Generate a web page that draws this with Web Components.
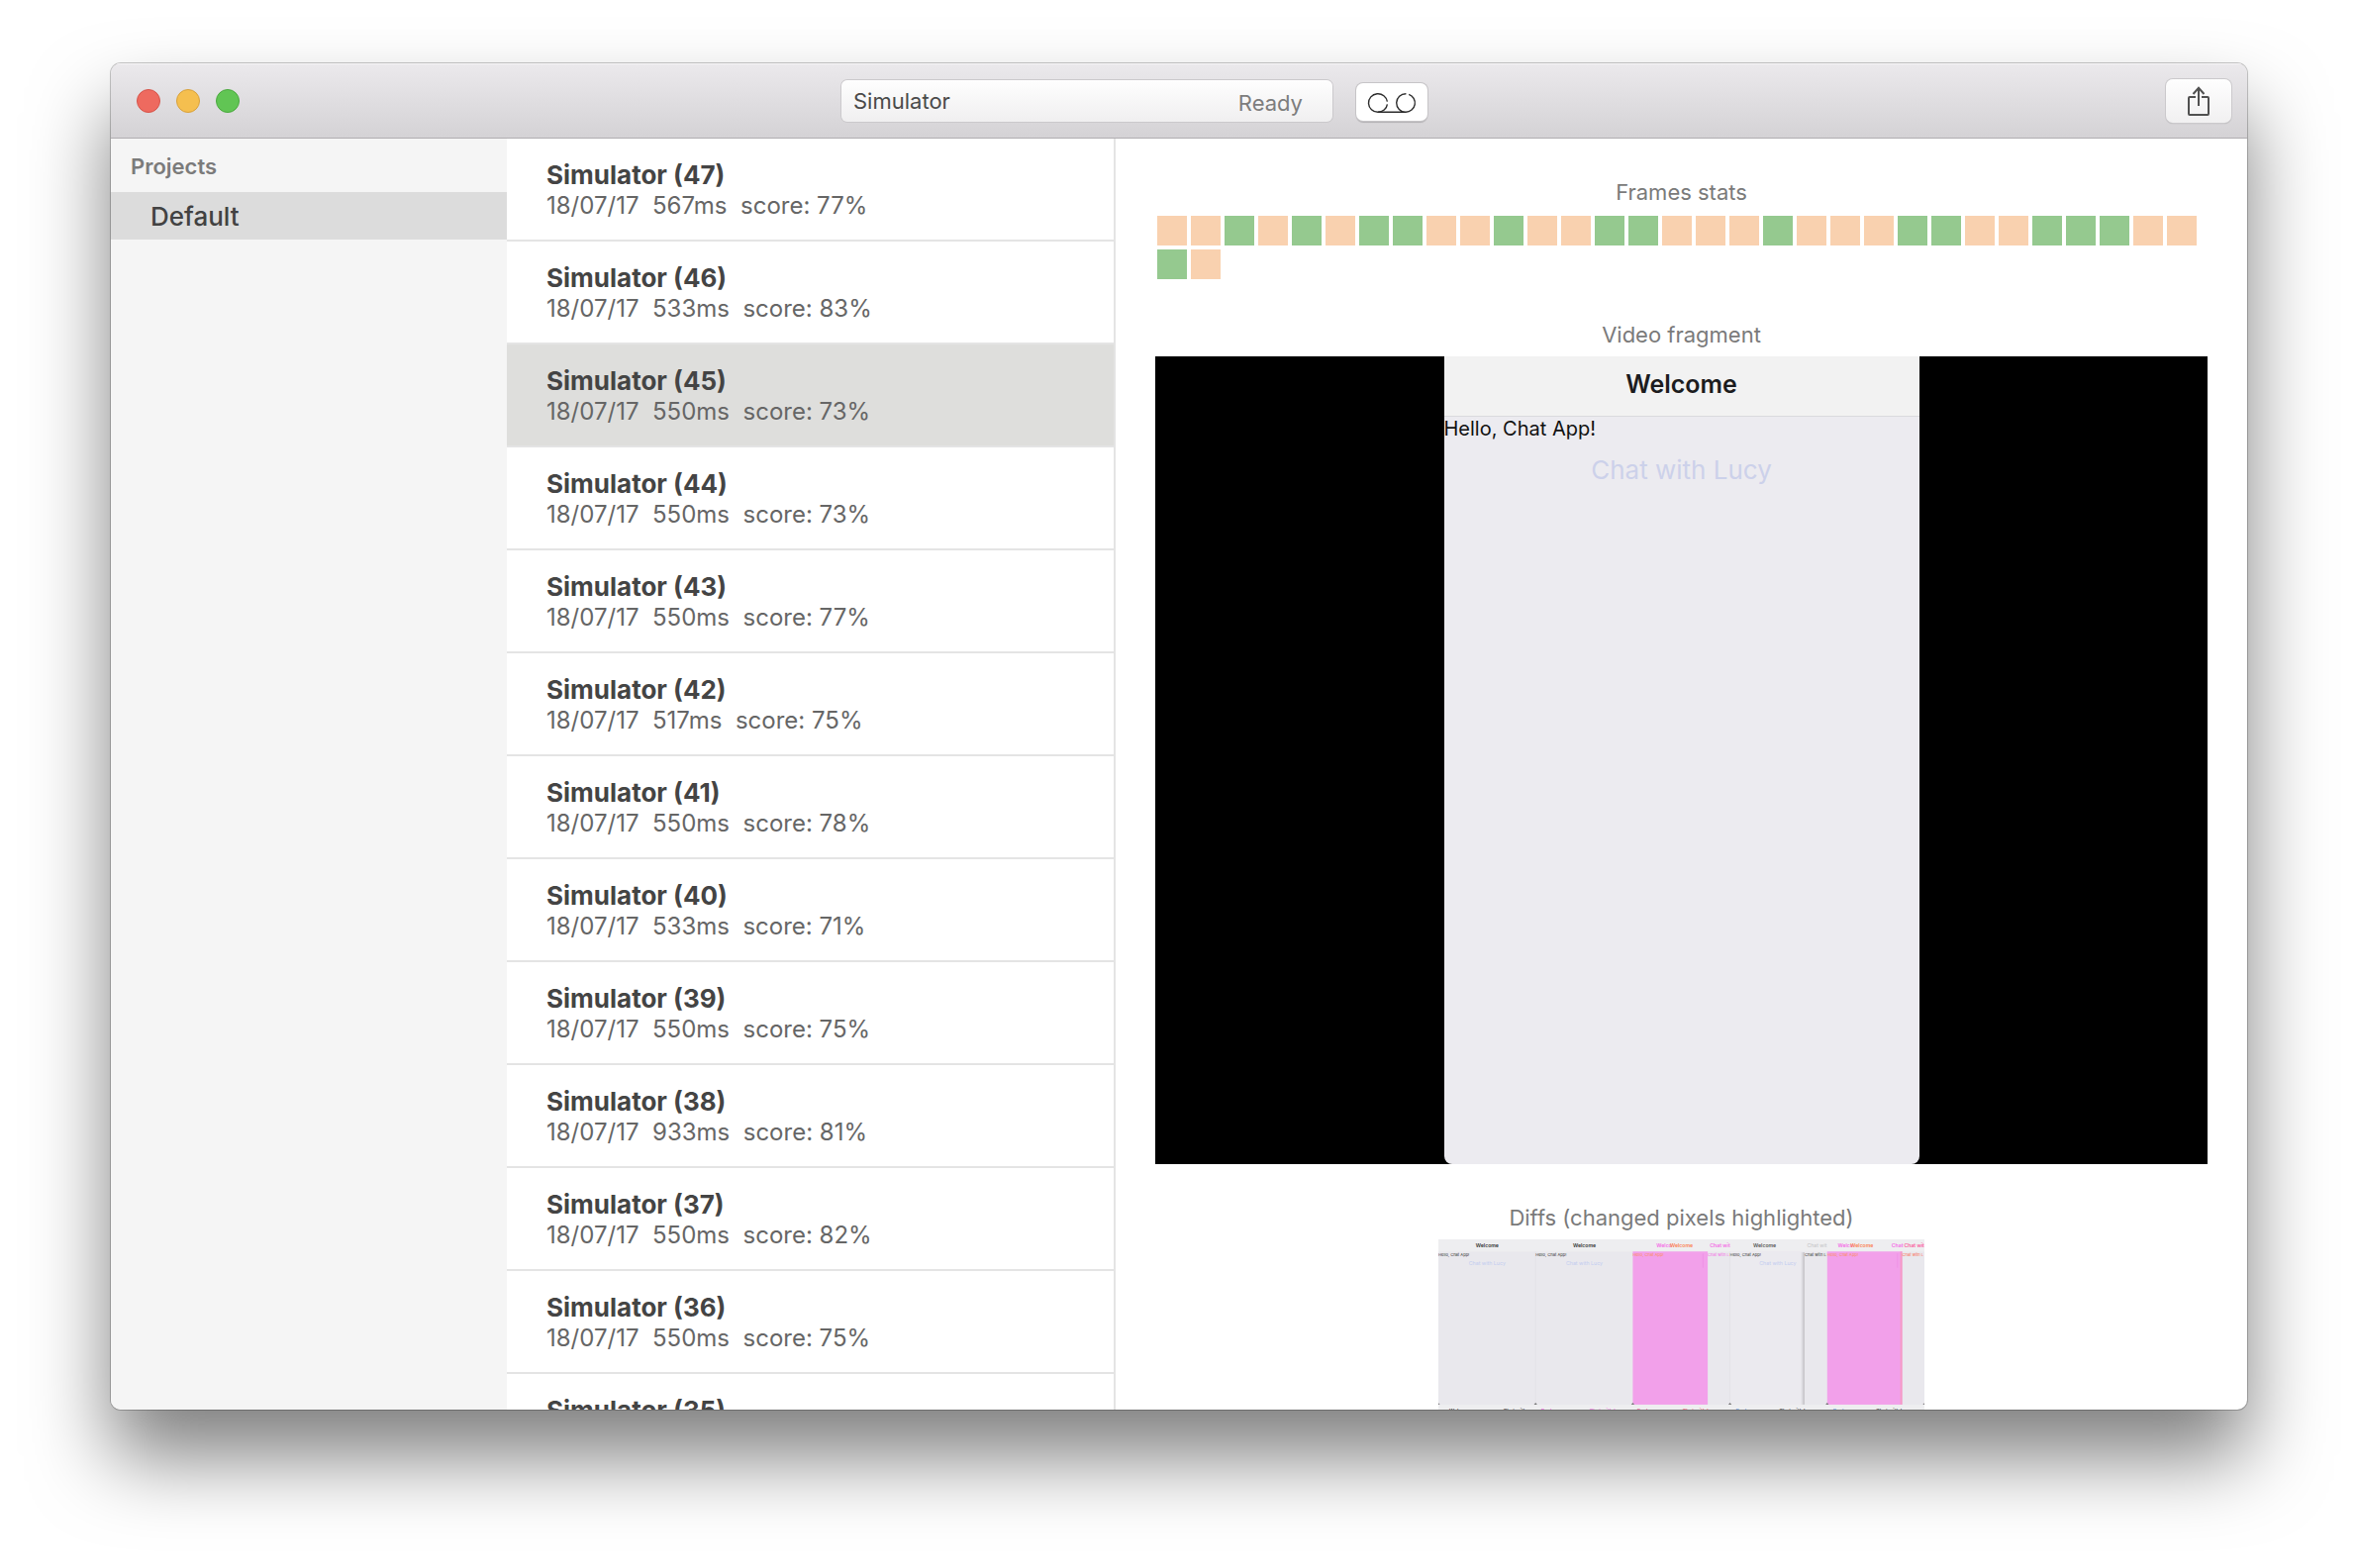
<!DOCTYPE html>
<html lang="en">
<head>
<meta charset="utf-8">
<title>Simulator</title>
<style>
  html, body { height: 100%; margin: 0; background: #fff; }
  body {
    box-sizing: border-box;
    padding: 64px 112px 160px;
    font-family: Inter, "Liberation Sans", sans-serif;
    color: #464646;
    overflow: hidden;
  }
</style>
</head>
<body>
<app-window>
  <tool-bar slot="toolbar" name="Simulator" status="Ready"></tool-bar>
  <project-sidebar></project-sidebar>
  <run-list></run-list>
  <run-detail>
    <detail-section heading="Frames stats"><frame-stats frames="OOGOGOGGOOGOOGGOOOGOOOGGOOGGGOOGO"></frame-stats></detail-section>
    <detail-section heading="Video fragment"><video-fragment></video-fragment></detail-section>
    <detail-section heading="Diffs (changed pixels highlighted)"><diff-sheet></diff-sheet></detail-section>
  </run-detail>
</app-window>

<script>
function define(name, render) {
  customElements.define(name, class extends HTMLElement {
    constructor() {
      super();
      this.attachShadow({ mode: 'open' });
    }
    connectedCallback() {
      this.shadowRoot.innerHTML = render(this);
    }
  });
}

define('app-window', () => `
  <style>
    :host {
      display: flex; flex-direction: column; height: 100%;
      border-radius: 10px; overflow: hidden; background: #fff;
      box-shadow: 0 0 0 1px rgba(0,0,0,.22), 0 48px 80px rgba(0,0,0,.5);
    }
    main { display: flex; flex: 1; min-height: 0; }
  </style>
  <slot name="toolbar"></slot>
  <main><slot></slot></main>`);

define('tool-bar', el => `
  <style>
    :host {
      display: grid; grid-template-columns: 8fr auto 9fr; align-items: center;
      box-sizing: border-box; height: 76px; flex: none; padding-left: 2px;
      background: linear-gradient(#ebe9ec, #d4d2d5);
      box-shadow: inset 0 1px #f7f6f7, inset 0 -1px #b0adb1;
    }
    .lights { display: flex; gap: 16px; padding-left: 24px; }
    .lights button { width: 24px; height: 24px; padding: 0; border-radius: 50%; border: 1px solid var(--rim); }
    .close { background: #ee6a5f; --rim: #d6544a; }
    .min { background: #f5bf4f; --rim: #d8a13c; }
    .zoom { background: #61c554; --rim: #4ba93f; }
    .middle { display: flex; gap: 24px; align-items: center; }
    .status {
      display: flex; justify-content: space-between; align-items: center; box-sizing: border-box;
      width: 496px; height: 42px; padding: 0 30px 0 12px; border-radius: 6px;
      background: linear-gradient(#fefefe, #f0eff0); box-shadow: 0 0 0 1px #cbc9cc;
      font-size: 22px; line-height: 28px; color: #4a4a4a;
    }
    .state { color: #7d7d7d; padding-top: 4px; }
    .tool {
      display: flex; align-items: center; justify-content: center; padding: 0;
      border: 0; border-radius: 7px;
      background: #fff; box-shadow: 0 0 0 1px #c6c4c7, 0 2px 1px rgba(0,0,0,.18);
    }
    .record { box-sizing: border-box; width: 72px; height: 38px; margin-top: 2px; padding-top: 2px; }
    .share {
      justify-self: end; margin-right: 16px; width: 66px; height: 44px;
      background: linear-gradient(#fefefe, #f1f0f1);
      box-shadow: 0 0 0 1px #cbc9cc, 0 1px 1px rgba(0,0,0,.25);
    }
    svg { display: block; fill: none; }
  </style>
  <div class="lights">
    <button class="close" aria-label="Close"></button>
    <button class="min" aria-label="Minimise"></button>
    <button class="zoom" aria-label="Zoom"></button>
  </div>
  <div class="middle">
    <div class="status"><span>${el.getAttribute('name')}</span><span class="state">${el.getAttribute('status')}</span></div>
    <button class="tool record" aria-label="Record">
      <svg width="50" height="22" viewBox="0 0 50 22" stroke="#2c2c2c" stroke-width="1.4">
        <path d="M20.400 9.700A9.500 9.300 0 1 0 11 20.300A9.500 9.300 0 0 0 20.400 12.300"/>
        <path d="M11 20.300H39A9.500 9.300 0 1 1 39.400 1.700M42.200 2.300A9.500 9.300 0 0 1 39 20.300"/>
      </svg>
    </button>
  </div>
  <button class="tool share" aria-label="Share">
    <svg width="24" height="32" viewBox="0 0 24 32" stroke="#505050" stroke-width="2">
      <path d="M9 12H3a1 1 0 0 0-1 1v16a1 1 0 0 0 1 1h18a1 1 0 0 0 1-1V13a1 1 0 0 0-1-1H15"/>
      <path d="M12 21V3M6.500 9L12 2.800L17.500 9"/>
    </svg>
  </button>`);

define('project-sidebar', () => `
  <style>
    :host { display: block; width: 400px; flex: none; background: #f5f5f5; }
    h2 { margin: 0; padding: 14px 20px 12px; font-size: 22px; line-height: 28px; font-weight: 600; color: #7b7b7b; }
    button {
      display: block; width: 100%; border: 0; padding: 2px 40px 0; text-align: left;
      font: 500 26px/46px Inter, sans-serif; color: #424242; background: #dcdcdc;
    }
  </style>
  <h2>Projects</h2>
  <button>Default</button>`);

define('run-row', el => `
  <style>
    :host { display: block; }
    button {
      display: flex; flex-direction: column; justify-content: flex-start; align-items: flex-start;
      box-sizing: border-box; width: 100%; height: 104px; padding: 21px 40px 0;
      border: 0; border-bottom: 2px solid #e4e4e4; background: #fff;
      text-align: left; font: inherit; white-space: pre;
    }
    :host([selected]) button { background: #dededc; }
    strong { font-size: 26px; line-height: 32px; font-weight: 700; color: #444; }
    span { font-size: 24px; line-height: 30px; color: #666; }
  </style>
  <button><strong>Simulator (${el.getAttribute('number')})</strong>${
    el.hasAttribute('time') ? `<span>18/07/17  ${el.getAttribute('time')}ms  score: ${el.getAttribute('score')}%</span>` : ''
  }</button>`);

const runs = [
  [47, 567, 77], [46, 533, 83], [45, 550, 73], [44, 550, 73], [43, 550, 77], [42, 517, 75],
  [41, 550, 78], [40, 533, 71], [39, 550, 75], [38, 933, 81], [37, 550, 82], [36, 550, 75], [35]
];
define('run-list', () => `
  <style>
    :host { display: block; box-sizing: border-box; width: 615px; flex: none; overflow: hidden; border-right: 2px solid #e4e4e4; }
  </style>
  ${runs.map(([n, time, score]) =>
    `<run-row number="${n}" ${time ? `time="${time}" score="${score}"` : ''} ${n === 45 ? 'selected' : ''}></run-row>`).join('')}`);

define('run-detail', () => `
  <style>
    :host { display: flex; flex-direction: column; gap: 40px; flex: 1; min-width: 0; padding: 40px; overflow: hidden; }
  </style>
  <slot></slot>`);

define('detail-section', el => `
  <style>
    :host { display: flex; flex-direction: column; gap: 8px; }
    h3 { margin: 0; text-align: center; font-size: 22px; line-height: 28px; font-weight: 400; color: #7a7a7a; }
  </style>
  <h3>${el.getAttribute('heading')}</h3>
  <slot></slot>`);

define('frame-stats', el => `
  <style>
    :host { display: flex; flex-wrap: wrap; gap: 4px; padding: 2px; }
    i { width: 30px; height: 30px; background: #f9d1af; }
    .G { background: #95c98f; }
  </style>
  ${[...el.getAttribute('frames')].map(f => `<i class="${f}"></i>`).join('')}`);

define('video-fragment', () => `
  <style>
    :host { display: flex; justify-content: center; height: 816px; background: #000; }
    .phone { width: 480px; border-radius: 0 0 8px 8px; background: #ecebf0; }
    header {
      box-sizing: border-box; height: 61px; border-bottom: 1px solid #dadadd; background: #f2f2f2;
      text-align: center; font-size: 25px; line-height: 56px; font-weight: 600; color: #1c1c1e;
    }
    p { margin: 0; font-size: 20px; line-height: 24px; color: #111; }
    a { display: block; margin-top: 14px; text-align: center; font-size: 26px; line-height: 32px; color: #ccd1ea; text-decoration: none; }
  </style>
  <div class="phone">
    <header>Welcome</header>
    <p>Hello, Chat App!</p>
    <a href="#">Chat with Lucy</a>
  </div>`);

/* Contact sheet of frames; every frame is a 480 by 816 cell. */
define('diff-sheet', () => `
  <style>
    :host { display: flex; justify-content: center; }
    svg { display: block; width: 491px; height: auto; flex: none; }
    .t { font-size: 25px; font-weight: 600; }
    .s { font-size: 20px; }
    .l { font-size: 26px; }
  </style>
  <svg viewBox="0 0 2400 1632" font-family="Inter, sans-serif">
    <rect width="2400" height="1632" fill="#e9e8ed"/>
    <rect width="2400" height="60" fill="#eeeef0"/>
    <rect y="816" width="2400" height="60" fill="#eeeef0"/>
    <rect x="1440" y="60" width="362" height="756" fill="#ebeaef"/>
    <path d="M480 60V816M1440 60V816" stroke="#e3e2e8" stroke-width="5"/>
    <g fill="#f2a0ea">
      <rect x="960" y="60" width="370" height="756"/>
      <rect x="1920" y="60" width="370" height="756"/>
    </g>
    <path d="M1307 70V140M2267 70V140" stroke="#ee8fe4" stroke-width="4"/>
    <rect x="2281" y="60" width="9" height="756" fill="#f59ac4"/>
    <rect x="1792" y="64" width="8" height="752" fill="#dddce1"/>
    <rect x="1800" y="64" width="8" height="752" fill="#c6c5ca"/>
    <g fill="#777">
      <path d="M0 808v8h8zM472 816h16l-8-10zM952 816h16l-8-10zM1432 816h16l-8-10zM1912 816h16l-8-10zM2400 808v8h-8z"/>
    </g>
    <g fill="#333">
      <text class="t" x="185" y="38">Welcome</text>
      <text class="t" x="665" y="38">Welcome</text>
      <text class="t" x="1555" y="38" fill="#555">Welcome</text>
      <text class="s" x="0" y="82">Hello, Chat App!</text>
      <text class="s" x="480" y="82">Hello, Chat App!</text>
      <text class="s" x="1440" y="82">Hello, Chat App!</text>
      <text class="s" x="1809" y="82">Chat with L</text>
    </g>
    <g class="l" fill="#c3cdf0">
      <text x="150" y="127">Chat with Lucy</text>
      <text x="630" y="127">Chat with Lucy</text>
      <text x="1585" y="127">Chat with Lucy</text>
    </g>
    <g class="t" fill="#f56be6">
      <text x="1077" y="38">Welco</text>
      <text x="1341" y="38">Chat wit</text>
      <text x="1972" y="38">Welco</text>
      <text x="2238" y="38">Chat</text>
      <text x="1821" y="38" fill="#c4c4c6" font-weight="400">Chat wit</text>
    </g>
    <g class="t" fill="#fb7e50">
      <text x="1144" y="38">Welcome</text>
      <text x="2035" y="38">Welcome</text>
      <text x="2300" y="38" fill="#fb5a9c">Chat wit</text>
    </g>
    <g class="s">
      <text x="1330" y="82" fill="#f56be6">Chat with L</text>
      <text x="960" y="82" fill="#fb8f58">Hello, Chat App!</text>
      <text x="1920" y="82" fill="#fb8f58">Hello, Chat App!</text>
      <text x="2290" y="82" fill="#fb6a50">Chat with L</text>
    </g>
    <g class="t" fill="#444">
      <text x="54" y="854">Welcome</text>
      <text x="320" y="854">Chat with</text>
      <text x="1683" y="854">Chat with Lucy</text>
      <text x="2161" y="854">Chat with Lucy</text>
      <text x="490" y="854" fill="#f56be6">‹ Back</text>
      <text x="580" y="854" fill="#f8609c">come</text>
      <text x="745" y="854" fill="#f56be6">Chat with Lucy</text>
      <text x="965" y="854" fill="#f8609c">‹ Back</text>
      <text x="1205" y="854" fill="#fb5a70">Chat with Lucy</text>
      <text x="1452" y="854" fill="#6fa4e8">‹ Back</text>
      <text x="1932" y="854" fill="#6fa4e8">‹ Back</text>
    </g>
  </svg>`);
</script>
</body>
</html>
